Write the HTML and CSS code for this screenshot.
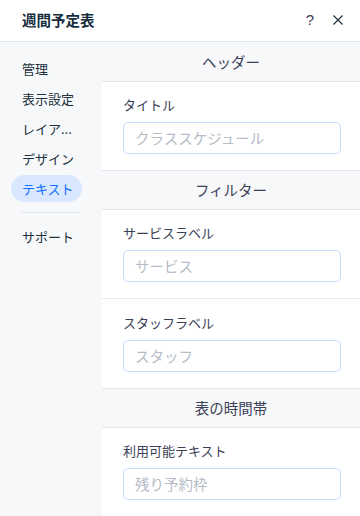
FILE: index.html
```html
<!DOCTYPE html>
<html lang="ja">
<head>
<meta charset="utf-8">
<link rel="stylesheet" href="styles.css">
</head>
<body>
<div class="app">
  <header class="topbar">
    <h1 class="title">週間予定表</h1>
    <div class="actions">
      <span class="help">?</span>
      <svg class="close" width="12" height="12" viewBox="0 0 12 12"><path d="M1.5 1.5 L10.5 10.5 M10.5 1.5 L1.5 10.5" stroke="#20303c" stroke-width="1.2" fill="none"/></svg>
    </div>
  </header>
  <div class="body">
    <nav class="sidebar">
      <div class="nav-item">管理</div>
      <div class="nav-item">表示設定</div>
      <div class="nav-item">レイア...</div>
      <div class="nav-item">デザイン</div>
      <div class="nav-item active">テキスト</div>
      <div class="nav-divider"></div>
      <div class="nav-item">サポート</div>
    </nav>
    <main class="panel">
      <div class="section-head">ヘッダー</div>
      <div class="field">
        <label class="label">タイトル</label>
        <div class="input">クラススケジュール</div>
      </div>
      <div class="section-head">フィルター</div>
      <div class="field">
        <label class="label">サービスラベル</label>
        <div class="input">サービス</div>
      </div>
      <div class="field">
        <label class="label">スタッフラベル</label>
        <div class="input">スタッフ</div>
      </div>
      <div class="section-head">表の時間帯</div>
      <div class="field">
        <label class="label">利用可能テキスト</label>
        <div class="input">残り予約枠</div>
      </div>
    </main>
  </div>
</div>
</body>
</html>
```
FILE: styles.css
```css
* { box-sizing: border-box; }
html, body { margin: 0; padding: 0; }
body {
  width: 360px;
  height: 516px;
  overflow: hidden;
  background: #fff;
  font-family: "Noto Sans CJK JP", "Noto Sans", sans-serif;
  color: #20303c;
}
.app { display: flex; flex-direction: column; height: 516px; }
.topbar {
  height: 42px;
  flex: none;
  display: flex;
  align-items: center;
  justify-content: space-between;
  padding: 0 16px 0 22px;
  border-bottom: 1px solid #e1e5ee;
}
.title {
  margin: 0;
  font-size: 14.5px;
  font-weight: 700;
  color: #162d3d;
  line-height: 20px;
  margin-top: -2px;
}
.actions { display: flex; align-items: center; gap: 18px; margin-top: -2px; }
.help {
  font-family: "Liberation Sans", sans-serif;
  font-size: 15px;
  color: #3b4057;
  line-height: 16px;
}
.close { display: block; }
.body { flex: 1; display: flex; min-height: 0; }
.sidebar {
  width: 102px;
  flex: none;
  background: #f7f8f9;
  padding: 13px 0 0 11px;
  display: flex;
  flex-direction: column;
  gap: 3px;
}
.nav-item {
  width: 71px;
  height: 27px;
  padding-left: 11px;
  font-size: 13px;
  line-height: 27px;
  color: #20303c;
  border-radius: 14px;
  white-space: nowrap;
}
.nav-item.active {
  background: #d9e8ff;
  color: #116dff;
}
.nav-divider {
  height: 1px;
  width: 60px;
  margin: 7px 0 7px 10px;
  background: #e3e6ea;
}
.panel {
  flex: 1;
  display: flex;
  flex-direction: column;
}
.section-head {
  height: 40px;
  background: #f7f8f9;
  border-top: 1px solid #e1e5ee;
  border-bottom: 1px solid #e1e5ee;
  display: flex;
  align-items: center;
  justify-content: center;
  font-size: 14.5px;
  color: #3b4057;
}
.panel > .section-head:first-child { border-top: none; }
.field {
  padding: 14.5px 19px 16px 21px;
  display: flex;
  flex-direction: column;
  gap: 8px;
}
.field + .field { border-top: 1px solid #e6e9ee; }
.label {
  font-size: 13px;
  line-height: 18px;
  color: #3b4057;
}
.input {
  height: 32px;
  border: 1px solid #c6dcff;
  border-radius: 5px;
  padding: 0 11px;
  font-size: 14.5px;
  line-height: 30px;
  color: #b5bbc7;
}
```
